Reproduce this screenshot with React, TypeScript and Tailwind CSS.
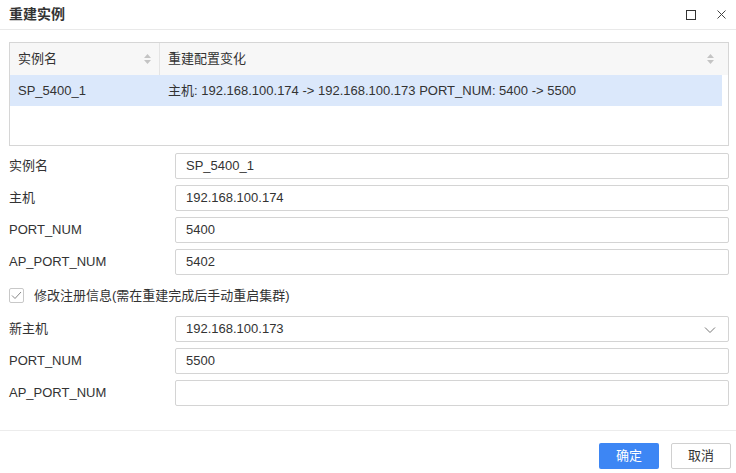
import { useState } from "react";

const font = { fontFamily: '"Liberation Sans", "Noto Sans CJK SC", sans-serif' };

const inputCss =
  "h-[26px] flex-1 rounded-[2px] border border-[#d4d4d4] bg-white px-[10px] text-[13px] text-[#333] outline-none";

const SortIcon = () => (
  <svg width="9" height="12" viewBox="0 0 9 12" className="shrink-0">
    <path d="M4.5 1 L8 5 H1 Z" fill="#c4c4c4" />
    <path d="M4.5 11 L8 7 H1 Z" fill="#c4c4c4" />
  </svg>
);

const Row = ({ label, value, select }: { label: string; value: string; select?: boolean }) => (
  <div className="flex h-[26px] items-center">
    <div className="w-[166px] shrink-0 text-[13px] text-[#333]">{label}</div>
    <div className={inputCss + " relative flex items-center"}>
      <span>{value}</span>
      {select && (
        <svg width="12" height="8" viewBox="0 0 12 8" className="absolute right-[12px] top-[9px]">
          <path d="M1 1.5 L6 6.5 L11 1.5" fill="none" stroke="#777" strokeWidth="1" />
        </svg>
      )}
    </div>
  </div>
);

export default function App() {
  const [checked, setChecked] = useState(true);

  return (
    <div className="h-[473px] w-[736px] bg-white" style={font}>
      <div className="flex h-[30px] items-center justify-between border-b border-[#e9e9e9] pl-[9px] pr-[10px]">
        <span className="text-[14px] font-semibold text-[#333]">重建实例</span>
        <div className="flex items-center gap-[21px]">
          <div className="h-[10px] w-[10px] border border-[#333]" />
          <svg width="9" height="9" viewBox="0 0 9 9">
            <path d="M0.5 0.5 L8.5 8.5 M8.5 0.5 L0.5 8.5" stroke="#444" strokeWidth="1" />
          </svg>
        </div>
      </div>

      <div className="pl-[9px] pr-[7px] pt-[12px]">
        <div className="h-[104px] border border-[#d6d6d6]">
          <div className="flex h-[32px] bg-[#f7f7f7] pr-[7px]">
            <div className="flex w-[150px] items-center justify-between border-r border-[#e4e4e4] pl-[8px] pr-[7px] text-[13px] text-[#333]">
              <span>实例名</span>
              <SortIcon />
            </div>
            <div className="flex flex-1 items-center justify-between pl-[8px] pr-[6px] text-[13px] text-[#333]">
              <span>重建配置变化</span>
              <SortIcon />
            </div>
          </div>
          <div className="mr-[6px] flex h-[31px] items-center bg-[#dbe8fb] text-[13px] text-[#333]">
            <div className="w-[150px] pl-[8px]">SP_5400_1</div>
            <div className="pl-[8px]">主机: 192.168.100.174 -&gt; 192.168.100.173 PORT_NUM: 5400 -&gt; 5500</div>
          </div>
        </div>

        <div className="mt-[7px] flex flex-col gap-[6px]">
          <Row label="实例名" value="SP_5400_1" />
          <Row label="主机" value="192.168.100.174" />
          <Row label="PORT_NUM" value="5400" />
          <Row label="AP_PORT_NUM" value="5402" />
        </div>

        <label className="mt-[13px] flex h-[15px] cursor-pointer items-center gap-[10px] text-[13px] text-[#333]">
          <span
            className="flex h-[15px] w-[15px] items-center justify-center rounded-[2px] border border-[#c8c8c8] bg-white"
            onClick={() => setChecked(!checked)}
          >
            {checked && (
              <svg width="11" height="9" viewBox="0 0 11 9">
                <path d="M1 4.5 L4 7.5 L10 1" fill="none" stroke="#888" strokeWidth="1" />
              </svg>
            )}
          </span>
          <span>修改注册信息(需在重建完成后手动重启集群)</span>
        </label>

        <div className="mt-[13px] flex flex-col gap-[6px]">
          <Row label="新主机" value="192.168.100.173" select />
          <Row label="PORT_NUM" value="5500" />
          <Row label="AP_PORT_NUM" value="" />
        </div>
      </div>

      <div className="mt-[24px] flex justify-end gap-[12px] border-t border-[#ececec] pr-[5px] pt-[12px]">
        <button className="h-[26px] w-[60px] rounded-[2px] bg-[#3d86f4] text-[13px] text-white">确定</button>
        <button className="h-[26px] w-[60px] rounded-[2px] border border-[#d0d0d0] bg-white text-[13px] text-[#333]">
          取消
        </button>
      </div>
    </div>
  );
}
